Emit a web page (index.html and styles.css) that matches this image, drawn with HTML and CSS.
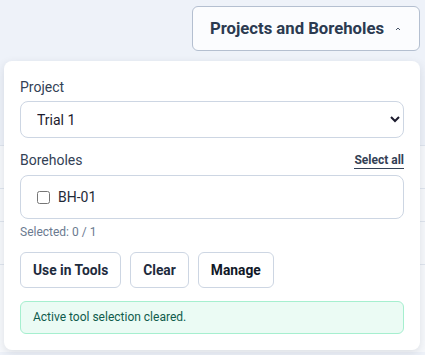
FILE: index.html
```html
<!DOCTYPE html>
<html lang="en">
<head>
    <meta charset="UTF-8">
    <meta name="viewport" content="width=device-width, initial-scale=1.0">
    <title>Projects and Boreholes</title>
    <link rel="stylesheet" href="styles.css">
</head>
<body>
    <div class="page">
        <div class="topbar">
            <button class="toggle">
                Projects and Boreholes
                <svg class="caret" width="6" height="4" viewBox="0 0 6 4"><path d="M1 3 L3 1 L5 3" fill="none" stroke="#475569" stroke-width="1"/></svg>
            </button>
        </div>

        <!-- table behind the dropdown -->
        <div class="table">
            <div class="row"></div>
            <div class="row tall"></div>
            <div class="row"></div>
            <div class="row big"></div>
        </div>

        <div class="panel">
            <label class="field-label" for="project">Project</label>
            <select id="project" class="select">
                <option>Trial 1</option>
            </select>

            <div class="section-head">
                <span class="field-label">Boreholes</span>
                <a class="select-all" href="#">Select all</a>
            </div>
            <div class="bh-list">
                <input type="checkbox" id="bh01">
                <label for="bh01">BH-01</label>
            </div>
            <div class="count">Selected: 0 / 1</div>

            <div class="actions">
                <button class="btn">Use in Tools</button>
                <button class="btn">Clear</button>
                <button class="btn dark">Manage</button>
            </div>

            <div class="notice">Active tool selection cleared.</div>
        </div>
    </div>
</body>
</html>
```

FILE: styles.css
```css
body {
    margin: 0;
    font-family: Roboto, "Noto Sans", Arial, sans-serif;
    background-color: #eef2f9;
    color: #334155;
}

.page {
    position: relative;
    height: 355px;
    overflow: hidden;
}

.topbar {
    display: flex;
    justify-content: flex-end;
    padding: 6px 5px 0 0;
}

.toggle {
    display: flex;
    align-items: center;
    gap: 11px;
    height: 45px;
    padding: 0 18px 0 17px;
    font-family: inherit;
    font-size: 16.7px;
    font-weight: 700;
    color: #2b3a50;
    background-color: #fbfcfe;
    border: 1px solid #b4bfd0;
    border-radius: 6px;
}

.table {
    margin-top: 94px;
    background-color: #f7f9fc;
}

.row {
    height: 42px;
    border-top: 1px solid #dfe5ee;
}

.row.tall {
    height: 32px;
}

.row.big {
    height: 87px;
}

.panel {
    position: absolute;
    top: 61px;
    left: 4px;
    right: 5px;
    padding: 16px;
    background-color: #ffffff;
    border-radius: 8px;
    box-shadow: 0 3px 10px rgba(30, 41, 59, 0.12);
}

.field-label {
    display: block;
    font-size: 14px;
    line-height: 20px;
    color: #334155;
}

.select {
    display: block;
    width: 100%;
    height: 37px;
    margin-top: 4px;
    padding: 0 10px 0 12px;
    font-family: inherit;
    font-size: 14px;
    color: #1c1b2e;
    background-color: #ffffff;
    border: 1px solid #cdd6e3;
    border-radius: 8px;
}

.section-head {
    display: flex;
    justify-content: space-between;
    align-items: center;
    margin-top: 12px;
}

.select-all {
    font-size: 12px;
    font-weight: 700;
    line-height: 16px;
    color: #334155;
    text-decoration: none;
    border-bottom: 1px solid #334155;
}

.bh-list {
    display: flex;
    align-items: center;
    gap: 8px;
    height: 42px;
    margin-top: 5px;
    padding: 0 16px;
    border: 1px solid #cdd6e3;
    border-radius: 8px;
}

.bh-list input {
    width: 13px;
    height: 13px;
    margin: 0;
}

.bh-list label {
    font-size: 14px;
    color: #1f2937;
}

.count {
    margin-top: 5px;
    font-size: 12px;
    line-height: 16px;
    color: #6b7a90;
}

.actions {
    display: flex;
    gap: 9px;
    margin-top: 12px;
}

.btn {
    height: 36px;
    padding: 0 12px;
    font-family: inherit;
    font-size: 13.8px;
    font-weight: 700;
    color: #1e2b3d;
    background-color: #ffffff;
    border: 1px solid #cdd6e3;
    border-radius: 6px;
}

.btn.dark {
    color: #111827;
}

.notice {
    margin-top: 13px;
    padding: 0 12px;
    height: 31px;
    line-height: 31px;
    font-size: 12px;
    color: #0f5c4c;
    background-color: #ebfbf4;
    border: 1px solid #a6efcf;
    border-radius: 6px;
}
```
